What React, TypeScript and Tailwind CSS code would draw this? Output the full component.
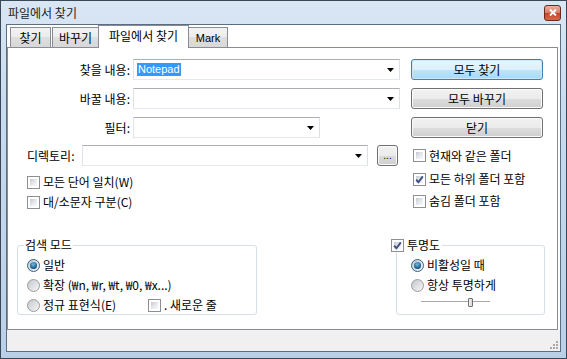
import React from "react"

const kr = "font-['Noto_Sans_CJK_KR',sans-serif]"
const latin = "font-['Liberation_Sans',sans-serif]"

function CheckBox({ checked = false }: { checked?: boolean }) {
  return (
    <span className="relative block h-[13px] w-[13px] shrink-0 border border-[#8e8f8f] bg-white p-[2px]">
      <span className="block h-full w-full bg-[linear-gradient(135deg,#c6cad0,#e9ecef_60%,#f7f7f7)]" />
      {checked && (
        <svg className="absolute left-0 top-0" width="11" height="11" viewBox="0 0 11 11">
          <path d="M2.2 5.6 L4.4 8.2 L8.8 2.4" fill="none" stroke="#3b5083" strokeWidth="1.9" />
        </svg>
      )}
    </span>
  )
}

function Radio({ on = false }: { on?: boolean }) {
  return (
    <span
      className={`flex h-[13px] w-[13px] shrink-0 items-center justify-center rounded-full border bg-[linear-gradient(135deg,#c4c8ce,#f6f6f6)] ${
        on ? "border-[#2c628b]" : "border-[#9a9b9c]"
      }`}
    >
      {on && (
        <span className="block h-[7px] w-[7px] rounded-full bg-[radial-gradient(circle_at_45%_35%,#6cc0ee,#0f4a7a_75%)]" />
      )}
    </span>
  )
}

function Combo({ className, children }: { className: string; children?: React.ReactNode }) {
  return (
    <div
      className={`flex h-[21px] items-center justify-between border border-[#abadb3] border-b-[#e3e9ef] border-l-[#e2e3ea] border-r-[#dbdfe6] bg-white pl-[3px] pr-[5px] ${className}`}
    >
      <div className="flex items-center">{children}</div>
      <svg width="7" height="4" viewBox="0 0 7 4">
        <path d="M0 0H7L3.5 4Z" fill="#000" />
      </svg>
    </div>
  )
}

function Btn({
  children,
  primary = false,
  className = "",
}: {
  children: React.ReactNode
  primary?: boolean
  className?: string
}) {
  return (
    <div
      className={`flex h-[21px] items-center justify-center rounded-[3px] border ${
        primary
          ? "border-[#3c7fb1] bg-[linear-gradient(180deg,#eaf6fd,#d9f0fc_50%,#bee6fd_50%,#a7d9f5)] shadow-[inset_0_0_0_1px_#cde9f9]"
          : "border-[#707070] bg-[linear-gradient(180deg,#f2f2f2,#ebebeb_50%,#dddddd_50%,#cfcfcf)] shadow-[inset_0_0_0_1px_#fbfbfb]"
      } ${className}`}
    >
      {children}
    </div>
  )
}

function Tab({ label, active = false, className = "" }: { label: React.ReactNode; active?: boolean; className?: string }) {
  if (active) {
    return (
      <div
        className={`relative z-10 -mb-px flex h-[23px] items-center justify-center border border-b-0 border-[#898c95] bg-white pb-[2px] ${className}`}
      >
        {label}
      </div>
    )
  }
  return (
    <div
      className={`flex h-[20px] items-center justify-center border border-b-0 border-[#898c95] bg-[linear-gradient(180deg,#f3f3f3,#ebebeb_50%,#dedede_50%,#d8d8d8)] ${className}`}
    >
      {label}
    </div>
  )
}

export default function App() {
  return (
    <div
      className={`h-[359px] w-[567px] overflow-hidden border border-[#3a4756] bg-[linear-gradient(180deg,#d9e6f4,#c8dbef_30%,#b9d0e8)] text-[12px] leading-[14px] text-black ${kr}`}
    >
      {/* title bar */}
      <div className="flex h-[23px] items-center justify-between pl-[7px] pr-[5px]">
        <span className="text-[#1b1b1b]">파일에서 찾기</span>
        <div className="flex h-[16px] w-[17px] items-center justify-center rounded-[3px] border border-[#6b2a1e] bg-[linear-gradient(180deg,#eab2a2,#d67a62_50%,#c2432a_50%,#d7684a)]">
          <svg width="8" height="7" viewBox="0 0 8 7">
            <path d="M1 0.5 L7 6.5 M7 0.5 L1 6.5" stroke="#fff" strokeWidth="2" />
          </svg>
        </div>
      </div>

      {/* client area */}
      <div className="ml-[5px] flex h-[328px] w-[555px] flex-col border border-[#5d6d80] bg-white">
        <div className="flex h-[22px] items-end pl-[3px]">
          <Tab label="찾기" className="w-[41px]" />
          <Tab label="바꾸기" className="ml-[1px] w-[47px]" />
          <Tab label="파일에서 찾기" active className="-ml-px w-[91px]" />
          <Tab label={<span className={`${latin} text-[11px]`}>Mark</span>} className="-ml-px w-[40px]" />
        </div>

        <div className="relative z-0 mr-[2px] h-[283px] shrink-0 border border-[#898c95] bg-white">
          <div className="mt-[11px] flex h-[21px] items-center">
            <div className="w-[122px] text-right">찾을 내용:</div>
            <Combo className="ml-[3px] w-[267px]">
              <span className={`bg-[#3399ff] px-[1px] text-[11px] leading-[13px] text-white ${latin}`}>Notepad</span>
            </Combo>
            <Btn primary className="ml-[11px] w-[132px]">
              모두 찾기
            </Btn>
          </div>

          <div className="mt-[8px] flex h-[21px] items-center">
            <div className="w-[122px] text-right">바꿀 내용:</div>
            <Combo className="ml-[3px] w-[267px]" />
            <Btn className="ml-[11px] w-[132px]">모두 바꾸기</Btn>
          </div>

          <div className="mt-[8px] flex h-[21px] items-center">
            <div className="w-[122px] text-right">필터:</div>
            <Combo className="ml-[3px] w-[187px]" />
            <Btn className="ml-[91px] w-[132px]">닫기</Btn>
          </div>

          <div className="mt-[7px] flex h-[21px] items-center">
            <div className="w-[74px] pl-[19px]">디렉토리:</div>
            <Combo className="w-[286px]" />
            <Btn className="ml-[9px] h-[19px] w-[21px]">
              <span className={`${latin} text-[10px]`}>...</span>
            </Btn>
            <div className="ml-[15px] flex items-center gap-[3px]">
              <CheckBox />
              현재와 같은 폴더
            </div>
          </div>

          <div className="flex">
            <div className="w-[405px] pl-[19px] pt-[6px]">
              <div className="flex h-[20px] items-center gap-[3px]">
                <CheckBox />
                모든 단어 일치(W)
              </div>
              <div className="flex h-[20px] items-center gap-[3px]">
                <CheckBox />
                대/소문자 구분(C)
              </div>
            </div>
            <div className="pt-[2px]">
              <div className="flex h-[22px] items-center gap-[3px]">
                <CheckBox checked />
                모든 하위 폴더 포함
              </div>
              <div className="flex h-[22px] items-center gap-[3px]">
                <CheckBox />
                숨김 폴더 포함
              </div>
            </div>
          </div>

          <div className="mt-[33px] flex">
            <div className="relative ml-[9px] h-[70px] w-[240px] rounded-[3px] border border-[#d5dfe5] pl-[9px] pt-[9px]">
              <span className="absolute left-[6px] top-[-8px] bg-white px-[1px]">검색 모드</span>
              <div className="flex h-[20px] items-center gap-[3px]">
                <Radio on />
                일반
              </div>
              <div className="flex h-[20px] items-center gap-[3px]">
                <Radio />
                확장 (₩n, ₩r, ₩t, ₩0, ₩x...)
              </div>
              <div className="flex h-[20px] items-center">
                <div className="flex w-[121px] items-center gap-[3px]">
                  <Radio />
                  정규 표현식(E)
                </div>
                <div className="flex items-center gap-[3px]">
                  <CheckBox />. 새로운 줄
                </div>
              </div>
            </div>

            <div className="relative ml-[139px] h-[70px] w-[149px] rounded-[3px] border border-[#d5dfe5] pl-[14px] pt-[9px]">
              <div className="absolute left-[-6px] top-[-8px] flex items-center gap-[3px] bg-white pr-[2px]">
                <CheckBox checked />
                투명도
              </div>
              <div className="flex h-[20px] items-center gap-[3px]">
                <Radio on />
                비활성일 때
              </div>
              <div className="flex h-[20px] items-center gap-[3px]">
                <Radio />
                항상 투명하게
              </div>
              <div className="relative ml-[10px] flex h-[14px] w-[69px] items-center">
                <div className="h-[2px] w-full border-b border-t border-b-white border-t-[#a8a8a8] bg-[#e4e4e4]" />
                <div className="absolute left-[47px] top-[3px] h-[9px] w-[5px] rounded-[1px] border border-[#707070] bg-[linear-gradient(90deg,#f6f6f6,#d4d4d4)]" />
              </div>
            </div>
          </div>
        </div>

        {/* status bar */}
        <div className="relative flex-1 bg-[#f0f0f0]">
          <svg className="absolute bottom-[1px] right-[1px]" width="11" height="11" viewBox="0 0 11 11">
            <g fill="#a9a9a9">
              <rect x="8" y="2" width="2" height="2" />
              <rect x="8" y="5" width="2" height="2" />
              <rect x="5" y="5" width="2" height="2" />
              <rect x="8" y="8" width="2" height="2" />
              <rect x="5" y="8" width="2" height="2" />
              <rect x="2" y="8" width="2" height="2" />
            </g>
          </svg>
        </div>
      </div>
    </div>
  )
}
